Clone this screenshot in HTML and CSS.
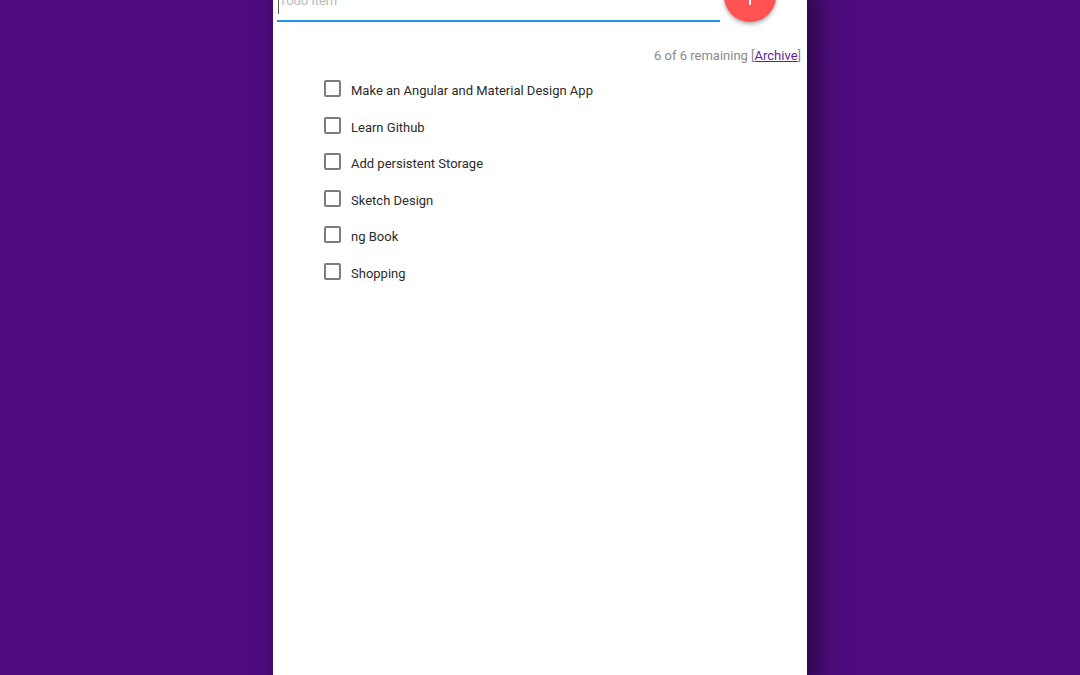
FILE: index.html
```html
<!DOCTYPE html>
<html lang="en">
<head>
<meta charset="utf-8">
<title>Todo</title>
<link rel="stylesheet" href="styles.css">
</head>
<body>
<main class="sheet">
  <form class="add">
    <div class="field">
      <input class="field-input" type="text" placeholder="Todo item" aria-label="Todo item">
      <span class="caret"></span>
    </div>
    <button class="fab" type="button" aria-label="Add">
      <svg class="fab-icon" viewBox="0 0 22 22" aria-hidden="true"><path d="M10 2h2v8h8v2h-8v8h-2v-8H2v-2h8z" fill="#fff"/></svg>
    </button>
  </form>
  <p class="status">6 of 6 remaining [<a class="archive" href="#archive">Archive</a>]</p>
  <ul class="todos">
    <li class="todo"><label class="todo-label"><input class="tick" type="checkbox"><span class="todo-text">Make an Angular and Material Design App</span></label></li>
    <li class="todo"><label class="todo-label"><input class="tick" type="checkbox"><span class="todo-text">Learn Github</span></label></li>
    <li class="todo"><label class="todo-label"><input class="tick" type="checkbox"><span class="todo-text">Add persistent Storage</span></label></li>
    <li class="todo"><label class="todo-label"><input class="tick" type="checkbox"><span class="todo-text">Sketch Design</span></label></li>
    <li class="todo"><label class="todo-label"><input class="tick" type="checkbox"><span class="todo-text">ng Book</span></label></li>
    <li class="todo"><label class="todo-label"><input class="tick" type="checkbox"><span class="todo-text">Shopping</span></label></li>
  </ul>
</main>
</body>
</html>
```
FILE: styles.css
```css
* { box-sizing: border-box; }
html { height: 100%; overflow: hidden; }
body {
  display: flow-root;
  margin: 0;
  height: 100%;
  background: #4e0c80;
  font-family: Roboto, "Liberation Sans", sans-serif;
  font-size: 13px;
  color: #2b2b2b;
}
.sheet {
  display: flow-root;
  max-width: 534px;
  min-height: calc(100% + 30px);
  margin: -30px auto 0;
  background: #fff;
  box-shadow: 10px 16px 26px rgba(0, 0, 0, 0.5);
}
.add {
  display: flex;
  align-items: flex-end;
  gap: 4px;
  margin: 0 31px 0 4px;
}
.field { position: relative; flex: 1; }
.field-input {
  display: block;
  width: 100%;
  height: 34px;
  padding: 0 2px 8px;
  border: 0;
  border-bottom: 2px solid #2196e8;
  outline: 0;
  background: transparent;
  font: inherit;
  line-height: 24px;
}
.field-input::placeholder { color: #b9b9b9; opacity: 1; }
.caret {
  position: absolute;
  left: 1px;
  bottom: 8px;
  width: 1px;
  height: 18px;
  background: #555;
}
.fab {
  flex: none;
  display: grid;
  place-items: center;
  width: 52px;
  height: 52px;
  padding: 0;
  border: 0;
  border-radius: 50%;
  background: #ff5252;
  box-shadow: 0 2px 4px rgba(0, 0, 0, 0.35);
}
.fab-icon { width: 22px; height: 22px; }
.status {
  margin: 24px 6px 0;
  line-height: 20px;
  text-align: right;
  color: #8a8a8a;
}
.archive { color: #5e1f9c; }
.todos {
  display: grid;
  grid-auto-rows: 1fr;
  height: 219px;
  margin: 7px 0 0;
  padding: 0 16px 0 51px;
  list-style: none;
}
.todo { display: flex; align-items: center; }
.todo-label { display: flex; align-items: flex-start; gap: 10px; }
.tick {
  appearance: none;
  flex: none;
  width: 17px;
  height: 17px;
  margin: 0;
  border: 2px solid #7d7d7d;
  border-radius: 2px;
}
.todo-text { line-height: 22px; }
```
